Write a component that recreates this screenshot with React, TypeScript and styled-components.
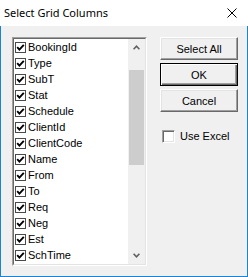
import React from "react";
import styled, { createGlobalStyle } from "styled-components";

const Global = createGlobalStyle`
  html, body { margin: 0; padding: 0; background: #ffffff; overflow: hidden; }
  * { box-sizing: border-box; }
`;

const Window = styled.div`
  width: 248px;
  height: 277px;
  display: flex;
  flex-direction: column;
  font-family: "Liberation Sans", Arial, sans-serif;
`;

const TitleBar = styled.div`
  height: 26px;
  flex: none;
  background: #ffffff;
  display: flex;
  align-items: center;
  justify-content: space-between;
  padding: 0 11px 0 4px;
`;

const Title = styled.span`
  font-family: "Noto Sans", "Liberation Sans", sans-serif;
  font-size: 11px;
  color: #000000;
  line-height: 14px;
`;

const CloseIcon = styled.svg`
  width: 10px;
  height: 10px;
  display: block;
`;

const Client = styled.div`
  flex: 1;
  background: #f0f0f0;
  border: 1px solid #1883d7;
  border-top: none;
  display: flex;
  align-items: flex-start;
  gap: 13px;
  padding: 11px 0 0 11px;
`;

const ListFrame = styled.div`
  width: 135px;
  height: 229px;
  border: 1px solid;
  border-color: #a0a0a0 #ffffff #ffffff #a0a0a0;
`;

const ListInner = styled.div`
  height: 100%;
  border: 1px solid;
  border-color: #696969 #e3e3e3 #e3e3e3 #696969;
  display: flex;
`;

const Items = styled.div`
  flex: 1;
  background: #ffffff;
  overflow: hidden;
`;

const Row = styled.div`
  height: 16px;
  display: flex;
  align-items: center;
  padding-left: 1px;
  gap: 2px;
  font-size: 11px;
  line-height: 16px;
  color: #000000;
  white-space: nowrap;
`;

const ListCheck = styled.span`
  width: 11px;
  height: 11px;
  flex: none;
  border: 1px solid #4a4a4a;
  background: #ffffff;
  display: flex;
  align-items: center;
  justify-content: center;
`;

const ScrollBar = styled.div`
  width: 17px;
  flex: none;
  background: #f0f0f0;
  display: flex;
  flex-direction: column;
`;

const ArrowButton = styled.div`
  height: 17px;
  flex: none;
  display: flex;
  align-items: center;
  justify-content: center;
`;

const Track = styled.div`
  flex: 1;
`;

const Thumb = styled.div`
  margin: 14px 1px 0 1px;
  height: 95px;
  background: #cdcdcd;
`;

const Side = styled.div`
  width: 78px;
  display: flex;
  flex-direction: column;
  gap: 3px;
`;

const Button = styled.div<{ $default?: boolean }>`
  width: 78px;
  height: 23px;
  background: #f0f0f0;
  display: flex;
  align-items: center;
  justify-content: center;
  font-size: 11px;
  color: #000000;
  border: 1px solid ${(p) => (p.$default ? "#000000" : "#ffffff")};
  ${(p) =>
    p.$default
      ? `box-shadow: inset 1px 1px #ffffff, inset -1px -1px #696969, inset -2px -2px #a0a0a0;`
      : `border-color: #ffffff #696969 #696969 #ffffff; box-shadow: inset -1px -1px #a0a0a0, inset 1px 1px #e3e3e3;`}
`;

const CheckRow = styled.label`
  margin-top: 15px;
  display: flex;
  align-items: center;
  gap: 5px;
  padding-left: 2px;
  font-size: 11px;
  color: #000000;
  line-height: 13px;
`;

const SunkenBox = styled.span`
  width: 13px;
  height: 13px;
  flex: none;
  background: #ffffff;
  border: 1px solid;
  border-color: #a0a0a0 #ffffff #ffffff #a0a0a0;
  box-shadow: inset 1px 1px #696969, inset -1px -1px #e3e3e3;
`;

const Chevron = ({ up }: { up?: boolean }) => (
  <svg width="7" height="5" viewBox="0 0 7 5" style={{ display: "block" }}>
    <path
      d={up ? "M0.6 4.2 L3.5 1.2 L6.4 4.2" : "M0.6 0.8 L3.5 3.8 L6.4 0.8"}
      fill="none"
      stroke="#606060"
      strokeWidth="1.6"
    />
  </svg>
);

const Check = () => (
  <svg width="9" height="9" viewBox="0 0 9 9" style={{ display: "block" }}>
    <path d="M1.2 4.2 L3.4 6.6 L7.8 1.8" fill="none" stroke="#000000" strokeWidth="1.9" />
  </svg>
);

const columns = [
  "BookingId",
  "Type",
  "SubT",
  "Stat",
  "Schedule",
  "ClientId",
  "ClientCode",
  "Name",
  "From",
  "To",
  "Req",
  "Neg",
  "Est",
  "SchTime",
];

export default function App() {
  return (
    <Window>
      <Global />
      <TitleBar>
        <Title>Select Grid Columns</Title>
        <CloseIcon viewBox="0 0 10 10">
          <path d="M0.5 0.5 L9.5 9.5 M9.5 0.5 L0.5 9.5" stroke="#000000" strokeWidth="1" />
        </CloseIcon>
      </TitleBar>
      <Client>
        <ListFrame>
          <ListInner>
            <Items>
              {columns.map((c) => (
                <Row key={c}>
                  <ListCheck>
                    <Check />
                  </ListCheck>
                  {c}
                </Row>
              ))}
            </Items>
            <ScrollBar>
              <ArrowButton>
                <Chevron up />
              </ArrowButton>
              <Track>
                <Thumb />
              </Track>
              <ArrowButton>
                <Chevron />
              </ArrowButton>
            </ScrollBar>
          </ListInner>
        </ListFrame>
        <Side>
          <Button>Select All</Button>
          <Button $default>OK</Button>
          <Button>Cancel</Button>
          <CheckRow>
            <SunkenBox />
            Use Excel
          </CheckRow>
        </Side>
      </Client>
    </Window>
  );
}
